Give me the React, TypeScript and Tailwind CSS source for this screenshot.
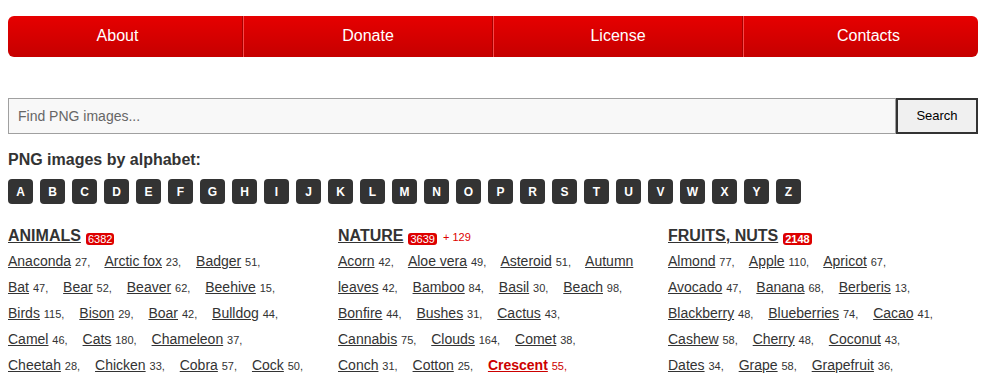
import React from "react";

type Item = { name: string; count: number; hot?: boolean };

const animals: Item[] = [
  { name: "Anaconda", count: 27 },
  { name: "Arctic fox", count: 23 },
  { name: "Badger", count: 51 },
  { name: "Bat", count: 47 },
  { name: "Bear", count: 52 },
  { name: "Beaver", count: 62 },
  { name: "Beehive", count: 15 },
  { name: "Birds", count: 115 },
  { name: "Bison", count: 29 },
  { name: "Boar", count: 42 },
  { name: "Bulldog", count: 44 },
  { name: "Camel", count: 46 },
  { name: "Cats", count: 180 },
  { name: "Chameleon", count: 37 },
  { name: "Cheetah", count: 28 },
  { name: "Chicken", count: 33 },
  { name: "Cobra", count: 57 },
  { name: "Cock", count: 50 },
];

const nature: Item[] = [
  { name: "Acorn", count: 42 },
  { name: "Aloe vera", count: 49 },
  { name: "Asteroid", count: 51 },
  { name: "Autumn leaves", count: 42 },
  { name: "Bamboo", count: 84 },
  { name: "Basil", count: 30 },
  { name: "Beach", count: 98 },
  { name: "Bonfire", count: 44 },
  { name: "Bushes", count: 31 },
  { name: "Cactus", count: 43 },
  { name: "Cannabis", count: 75 },
  { name: "Clouds", count: 164 },
  { name: "Comet", count: 38 },
  { name: "Conch", count: 31 },
  { name: "Cotton", count: 25 },
  { name: "Crescent", count: 55, hot: true },
];

const fruits: Item[] = [
  { name: "Almond", count: 77 },
  { name: "Apple", count: 110 },
  { name: "Apricot", count: 67 },
  { name: "Avocado", count: 47 },
  { name: "Banana", count: 68 },
  { name: "Berberis", count: 13 },
  { name: "Blackberry", count: 48 },
  { name: "Blueberries", count: 74 },
  { name: "Cacao", count: 41 },
  { name: "Cashew", count: 58 },
  { name: "Cherry", count: 48 },
  { name: "Coconut", count: 43 },
  { name: "Dates", count: 34 },
  { name: "Grape", count: 58 },
  { name: "Grapefruit", count: 36 },
];

const letters = "ABCDEFGHIJKLMNOPRSTUVWXYZ".split("");
const nav = ["About", "Donate", "License", "Contacts"];

function Category({
  title,
  total,
  extra,
  boldBadge,
  items,
}: {
  title: string;
  total: number;
  extra?: string;
  boldBadge?: boolean;
  items: Item[];
}) {
  return (
    <div className="w-[310px] shrink-0">
      <div className="h-[20px] leading-[20px] whitespace-nowrap">
        <a href="#" className="text-[16px] font-bold text-[#333] underline">
          {title}
        </a>
        <span
          className={
            "ml-[5px] inline-block h-[12px] rounded-[3px] bg-[#dd0000] px-[2px] align-[-2px] text-[11px] leading-[12px] text-white" +
            (boldBadge ? " font-bold" : "")
          }
        >
          {total}
        </span>
        {extra && <span className="ml-[6px] text-[11px] leading-none text-[#dd0000]">{extra}</span>}
      </div>
      <div className="mt-[2px] text-[14px] leading-[26px] text-[#333]">
        {items.map((it) => (
          <React.Fragment key={it.name}>
            <span className="mr-[11px]">
              <a
                href="#"
                className={it.hot ? "font-bold text-[#cc0000] underline" : "text-[#333] underline"}
              >
                {it.name}
              </a>
              {"\u00a0"}
              <span
                className={
                  "whitespace-nowrap text-[11px] leading-none " +
                  (it.hot ? "text-[#cc0000]" : "text-[#333]")
                }
              >
                {it.count},
              </span>
            </span>{" "}
          </React.Fragment>
        ))}
      </div>
    </div>
  );
}

export default function App() {
  return (
    <div
      className="h-[379px] overflow-hidden bg-white text-[#333]"
      style={{ fontFamily: '"Liberation Sans", Arial, sans-serif' }}
    >
      <div className="ml-2 w-[970px]">
        <div className="pt-4">
          <div className="h-[41px] overflow-hidden rounded-[6px] bg-gradient-to-b from-[#e60000] to-[#c60000]">
            <div className="ml-[-15px] flex h-full w-[1000px]">
              {nav.map((n, i) => (
                <div
                  key={n}
                  className={
                    "flex h-full w-[250px] items-center justify-center pb-[1px] text-[16px] text-white " +
                    (i > 0 ? "border-l border-l-[#f84848] " : "") +
                    (i < 3 ? "border-r border-r-[#a80000]" : "")
                  }
                >
                  {n}
                </div>
              ))}
            </div>
          </div>
        </div>

        <div className="mt-[41px] flex h-[36px]">
          <div className="flex flex-1 items-center border border-[#a0a0a0] bg-[#f8f8f8] pl-[9px] text-[14px] text-[#666]">
            Find PNG images...
          </div>
          <div className="flex w-[82px] items-center justify-center border-2 border-[#333] bg-[#f0f0f0] text-[13px] text-black">
            Search
          </div>
        </div>

        <div className="mt-4 h-[20px] text-[16px] font-bold leading-[20px] text-[#333]">
          PNG images by alphabet:
        </div>

        <div className="mt-[9px] flex gap-[7px]">
          {letters.map((l) => (
            <div
              key={l}
              className="flex h-[25px] w-[25px] items-center justify-center rounded-[4px] bg-[#333] text-[12px] font-bold text-white"
            >
              {l}
            </div>
          ))}
        </div>

        <div className="mt-[22px] flex gap-[20px]">
          <Category title="ANIMALS" total={6382} items={animals} />
          <Category title="NATURE" total={3639} extra="+ 129" items={nature} />
          <Category title="FRUITS, NUTS" total={2148} boldBadge items={fruits} />
        </div>
      </div>
    </div>
  );
}
